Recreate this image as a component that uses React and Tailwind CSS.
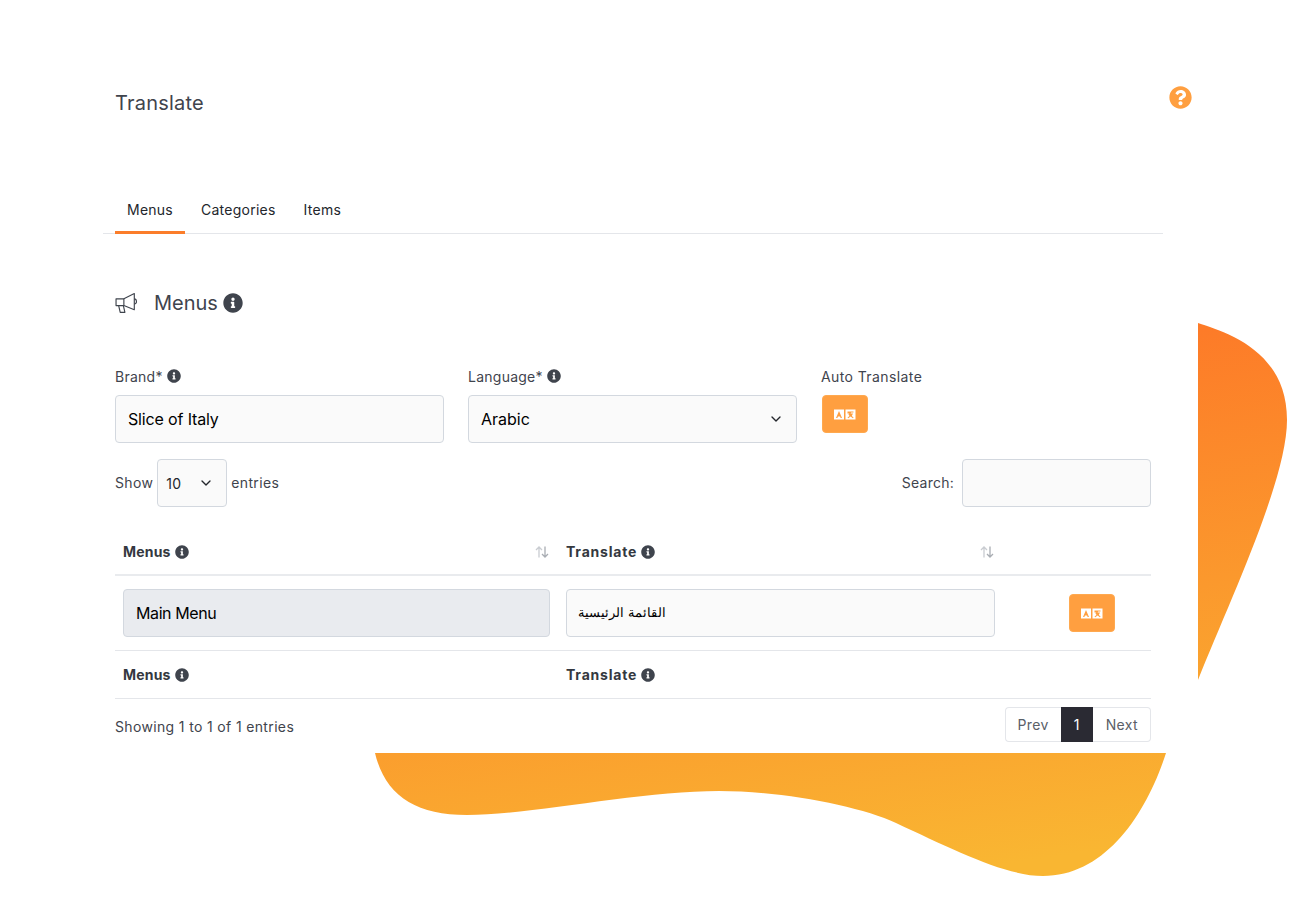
import React from "react";
import { FaInfoCircle, FaQuestionCircle } from "react-icons/fa";
import { ChevronDown } from "lucide-react";

function Blob() {
  return (
    <svg className="absolute inset-0" width="1300" height="900" viewBox="0 0 1300 900">
      <defs>
        <linearGradient id="blob" gradientUnits="userSpaceOnUse" x1="1200" y1="330" x2="1274" y2="824">
          <stop offset="0" stopColor="#fd7b28" />
          <stop offset="1" stopColor="#f9b632" />
        </linearGradient>
      </defs>
      <path
        fill="url(#blob)"
        d="M1198 323 C1225 332 1287 350 1287 420 C1287 480 1230 600 1198 680 L1166 753 C1146 815 1105 876 1043 876 C1005 876 952 849 896 823 C860 806 780 791 719 791 C640 791 530 815 467 815 C415 815 385 795 375 753 C370 700 370 500 500 400 C700 300 1000 300 1198 323 Z"
      />
    </svg>
  );
}

function Info({ className = "w-[14px] h-[14px]" }) {
  return <FaInfoCircle className={`${className} text-[#3f444d] shrink-0`} />;
}

function TranslateIcon() {
  return (
    <svg width="22" height="11" viewBox="0 0 22 11">
      <rect x="0" y="0.5" width="10" height="10" fill="#fff" />
      <rect x="11.5" y="0.5" width="10" height="10" fill="#fff" />
      <path d="M5 2 L8 9 H6.6 L6.1 7.6 H3.9 L3.4 9 H2 Z" fill="#ff9f40" />
      <path d="M13.5 2.5 H19.5 V3.6 H17.2 L16.6 4.6 H19 L17.8 7 L19.6 8.4 L18.9 9.2 L16.6 7.6 L14.2 9.2 L13.5 8.4 L15.6 7 L14.4 5.2 L15.4 4.6 H13.5 Z" fill="#ff9f40" />
    </svg>
  );
}

function TranslateButton() {
  return (
    <button className="w-[46px] h-[38px] rounded-[4px] bg-[#ff9f40] border border-[#ffa94f] flex items-center justify-center">
      <TranslateIcon />
    </button>
  );
}

function SortIcon() {
  return (
    <svg width="14" height="12" viewBox="0 0 14 12" fill="none" strokeWidth="1.3">
      <path d="M4 11.5 V1 M1 4 L4 1 L7 4" stroke="#c9ccd1" />
      <path d="M10 0.5 V11 M7 8 L10 11 L13 8" stroke="#a9adb3" />
    </svg>
  );
}

function Megaphone() {
  return (
    <svg width="24" height="23" viewBox="0 0 23 22" fill="none" stroke="#3f444d" strokeWidth="1.1" strokeLinejoin="round">
      <path d="M1 6.5 H8.5 L18.5 1.5 V17 L8.5 13 H1 Z" />
      <path d="M8.5 6.5 V13" />
      <path d="M3.5 13 L5 19.5 H9.5 L8 13" />
      <path d="M18.5 6.5 C21 6.5 21.5 11.5 18.5 11.5" />
    </svg>
  );
}

export default function App() {
  const tabs = ["Menus", "Categories", "Items"];

  return (
    <div className="relative w-[1300px] h-[900px] overflow-hidden bg-white font-['Inter',sans-serif] text-[14px] tracking-[0.35px] text-[#3f444d]">
      <Blob />

      <div className="relative w-[1198px] h-[753px] bg-white pl-[103px] pr-[35px]">
        {/* TITLE */}
        <div className="flex justify-between items-start pl-3 pt-[88px] h-[188px]">
          <h1 className="text-[20px] leading-[30px] tracking-[0.2px]">Translate</h1>
          <FaQuestionCircle className="w-[23px] h-[23px] text-[#ff9f40] -mt-[2px] -mr-[29px]" />
        </div>

        {/* TABS */}
        <div className="flex gap-1 pl-3 h-[46px] border-b border-[#e4e6ea]">
          {tabs.map((tab, index) => (
            <div
              key={tab}
              className={`px-3 pt-[12px] h-[46px] leading-[20px] tracking-[0.25px] text-[#23262c] ${index === 0 ? "border-b-[3px] border-[#fb7d2a]" : ""}`}
            >
              {tab}
            </div>
          ))}
        </div>

        <div className="px-3">
          {/* HEADING */}
          <div className="flex items-center h-[24px] mt-[57px]">
            <Megaphone />
            <span className="ml-[15px] text-[20px] leading-[24px] tracking-normal">Menus</span>
            <Info className="ml-[5px] w-[20px] h-[20px]" />
          </div>

          {/* FORM */}
          <div className="grid grid-cols-[329px_329px_329px] gap-x-6 mt-[50px]">
            <div>
              <div className="flex items-center gap-1 h-[22px] mb-2 tracking-[0.25px]">Brand* <Info /></div>
              <div className="h-[48px] flex items-center pb-px px-3 rounded-[4px] border border-[#d3d8df] bg-[#fafafa] text-[16px] tracking-[-0.15px] text-black">Slice of Italy</div>
            </div>
            <div>
              <div className="flex items-center gap-1 h-[22px] mb-2 tracking-[0.25px]">Language* <Info /></div>
              <div className="h-[48px] flex items-center justify-between pb-px px-3 rounded-[4px] border border-[#d3d8df] bg-[#fafafa] text-[16px] tracking-normal text-black">
                Arabic
                <ChevronDown className="w-4 h-4 text-[#23262c]" />
              </div>
            </div>
            <div>
              <div className="flex items-center h-[22px] mb-2 tracking-[0.4px]">Auto Translate</div>
              <div className="ml-px">
                <TranslateButton />
              </div>
            </div>
          </div>

          {/* SHOW / SEARCH */}
          <div className="flex items-center justify-between mt-4">
            <div className="flex items-center gap-1">
              <span className="-mt-[2px]">Show</span>
              <div className="w-[70px] h-[48px] flex items-center justify-between pl-2 pr-3 rounded-[4px] border border-[#d3d8df] bg-[#fafafa] text-[#23262c]">
                10
                <ChevronDown className="w-4 h-4" />
              </div>
              <span className="-mt-[2px]">entries</span>
            </div>
            <div className="flex items-center gap-2">
              <span className="-mt-[2px] tracking-[0.25px]">Search:</span>
              <div className="w-[189px] h-[48px] rounded-[4px] border border-[#d3d8df] bg-[#fafafa]" />
            </div>
          </div>

          {/* TABLE */}
          <div className="grid grid-cols-[443px_445px_148px] mt-[22px]">
            <div className="h-[47px] border-b-2 border-[#e9ebee] flex items-center gap-1 px-2 font-bold tracking-[0.2px] text-[#343840]">
              Menus <Info />
              <span className="ml-auto mr-px"><SortIcon /></span>
            </div>
            <div className="h-[47px] border-b-2 border-[#e9ebee] flex items-center gap-1 px-2 font-bold tracking-[0.8px] text-[#343840]">
              Translate <Info />
              <span className="ml-auto mr-px"><SortIcon /></span>
            </div>
            <div className="h-[47px] border-b-2 border-[#e9ebee]" />

            <div className="h-[75px] border-b border-[#e4e6ea] flex items-center px-2">
              <div className="w-full h-[48px] flex items-center px-3 rounded-[4px] border border-[#d3d8df] bg-[#e9ebef] text-[16px] tracking-[-0.4px] text-black">Main Menu</div>
            </div>
            <div className="h-[75px] border-b border-[#e4e6ea] flex items-center px-2">
              <div dir="rtl" className="w-full h-[48px] flex items-center justify-end px-[11px] rounded-[4px] border border-[#d3d8df] bg-[#fafafa] text-[13px] tracking-normal text-black">القائمة الرئيسية</div>
            </div>
            <div className="h-[75px] border-b border-[#e4e6ea] flex items-center pl-[66px]">
              <TranslateButton />
            </div>

            <div className="h-[48px] border-b border-[#e4e6ea] flex items-center gap-1 px-2 font-bold tracking-[0.2px] text-[#343840]">Menus <Info /></div>
            <div className="h-[48px] border-b border-[#e4e6ea] flex items-center gap-1 px-2 font-bold tracking-[0.8px] text-[#343840]">Translate <Info /></div>
            <div className="h-[48px] border-b border-[#e4e6ea]" />
          </div>

          {/* FOOTER */}
          <div className="flex items-start justify-between mt-2">
            <div className="pt-[10px] leading-[20px]">Showing 1 to 1 of 1 entries</div>
            <div className="flex h-[35px] items-stretch">
              <div className="px-3 flex items-center rounded-l-[4px] border border-[#e4e6ea] border-r-0 text-[#5a6068]">Prev</div>
              <div className="w-[32px] flex items-center justify-center bg-[#2a2a33] text-white">1</div>
              <div className="pl-[13px] pr-3 flex items-center rounded-r-[4px] border border-[#e4e6ea] border-l-0 text-[#5a6068]">Next</div>
            </div>
          </div>
        </div>
      </div>
    </div>
  );
}
